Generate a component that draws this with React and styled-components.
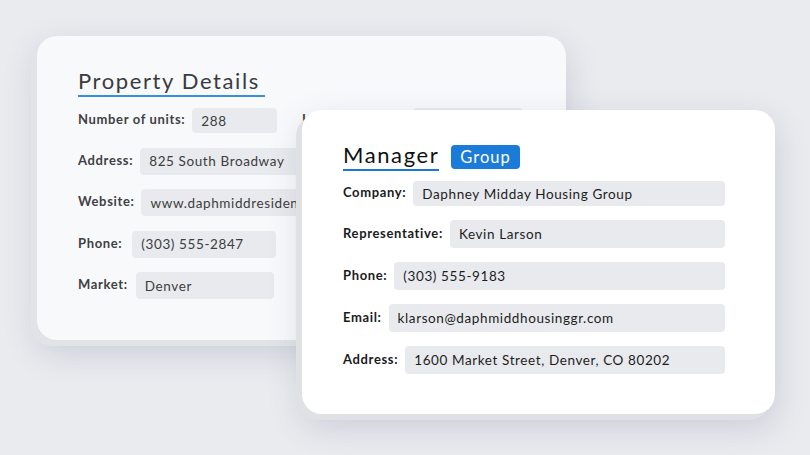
import React from 'react'
import styled, { createGlobalStyle } from 'styled-components'

const GlobalStyle = createGlobalStyle`
  html, body {
    margin: 0;
    padding: 0;
    background: #e9ebef;
  }
  body {
    font-family: 'Lato', 'Noto Sans', sans-serif;
    -webkit-font-smoothing: antialiased;
  }
`

const Stage = styled.div`
  position: relative;
  width: 810px;
  height: 455px;
  overflow: hidden;
  background: #e9ebef;
`

const Card = styled.div`
  box-sizing: border-box;
  width: ${p => p.w}px;
  height: 304px;
  border-radius: 20px;
  background: ${p => (p.front ? '#ffffff' : '#f8f9fb')};
  box-shadow: -6px 6px 0 ${p => (p.front ? '#dfe1e5' : '#e1e3e7')},
    0 12px 34px rgba(70, 78, 110, 0.2);
  padding: 33px 50px 0 41px;
  overflow: hidden;
`

const BackCard = styled(Card)`
  margin: 36px 0 0 37px;
`

const FrontCard = styled(Card)`
  position: absolute;
  left: 302px;
  top: 110px;
`

const Head = styled.div`
  display: flex;
  align-items: center;
  gap: 12px;
  margin-bottom: ${p => p.mb}px;
`

const Title = styled.h2`
  margin: 0;
  font-size: 22px;
  font-weight: 400;
  letter-spacing: ${p => p.ls}px;
  color: ${p => p.color};
  line-height: 24px;
  padding-bottom: 2px;
  border-bottom: 2px solid ${p => p.line};
  padding-right: ${p => p.pr || 0}px;
`

const Badge = styled.span`
  display: inline-block;
  background: #1a7bd8;
  color: #fff;
  font-size: 16.5px;
  letter-spacing: 1px;
  line-height: 24px;
  padding: 0 9px;
  border-radius: 4px;
  margin-top: -1px;
`

const Rows = styled.div`
  display: flex;
  flex-direction: column;
  gap: ${p => p.gap}px;
`

const Row = styled.div`
  display: flex;
  align-items: center;
  gap: ${p => p.gap || 7}px;
`

const Group = styled.div`
  display: flex;
  align-items: center;
  gap: 7px;
  margin-left: ${p => p.ml || 0}px;
`

const Label = styled.span`
  flex: none;
  font-size: 13px;
  font-weight: 700;
  letter-spacing: 0.65px;
  color: ${p => (p.dim ? '#3f4043' : '#1b1b1d')};
  margin-top: -3px;
`

const Field = styled.div`
  box-sizing: border-box;
  flex: ${p => (p.w ? 'none' : '1')};
  width: ${p => (p.w ? `${p.w}px` : 'auto')};
  height: ${p => p.h || 27}px;
  display: flex;
  align-items: center;
  padding-left: 9px;
  border-radius: 4px;
  background: #e8eaed;
  font-size: 13.5px;
  letter-spacing: 0.6px;
  color: ${p => (p.dim ? '#3c3d40' : '#1d1d1f')};
  white-space: nowrap;
  overflow: hidden;
`

export default function App() {
  return (
    <Stage>
      <GlobalStyle />
      <BackCard w={529}>
        <Head mb={11}>
          <Title color="#3a3b3e" line="#3a8fdc" ls={1.6} pr={5}>
            Property Details
          </Title>
        </Head>
        <Rows gap={14.5}>
          <Row>
            <Group>
              <Label dim>Number of units:</Label>
              <Field dim w={85} h={25}>288</Field>
            </Group>
            <Group ml={24}>
              <Label dim>Lease-up status:</Label>
              <Field dim w={110} h={25}>Stabilized</Field>
            </Group>
          </Row>
          <Row>
            <Label dim>Address:</Label>
            <Field dim w={260}>825 South Broadway</Field>
          </Row>
          <Row>
            <Label dim>Website:</Label>
            <Field dim w={260}>www.daphmiddresidences.com</Field>
          </Row>
          <Row gap={10}>
            <Label dim>Phone:</Label>
            <Field dim w={144}>(303) 555-2847</Field>
          </Row>
          <Row gap={8}>
            <Label dim>Market:</Label>
            <Field dim w={138}>Denver</Field>
          </Row>
        </Rows>
      </BackCard>

      <FrontCard front w={473}>
        <Head mb={10}>
          <Title color="#111113" line="#1c78d6" ls={1.6}>
            Manager
          </Title>
          <Badge>Group</Badge>
        </Head>
        <Rows gap={14}>
          <Row>
            <Label>Company:</Label>
            <Field h={25}>Daphney Midday Housing Group</Field>
          </Row>
          <Row>
            <Label>Representative:</Label>
            <Field h={28}>Kevin Larson</Field>
          </Row>
          <Row>
            <Label>Phone:</Label>
            <Field h={28}>(303) 555-9183</Field>
          </Row>
          <Row>
            <Label>Email:</Label>
            <Field h={28}>klarson@daphmiddhousinggr.com</Field>
          </Row>
          <Row>
            <Label>Address:</Label>
            <Field h={28}>1600 Market Street, Denver, CO 80202</Field>
          </Row>
        </Rows>
      </FrontCard>
    </Stage>
  )
}
